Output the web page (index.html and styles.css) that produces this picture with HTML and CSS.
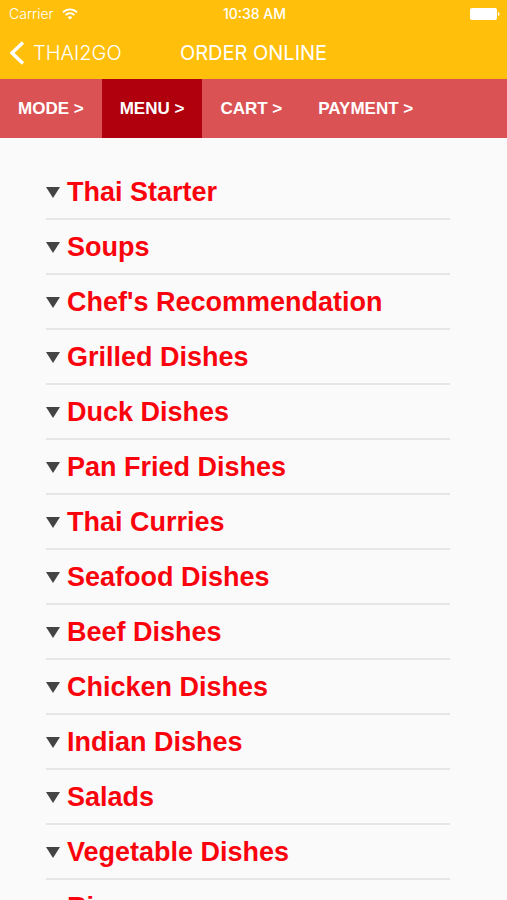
FILE: index.html
```html
<!DOCTYPE html>
<html lang="en">
<head>
<meta charset="UTF-8">
<meta name="viewport" content="width=device-width, initial-scale=1.0">
<title>Thai2Go - Order Online</title>
<link rel="stylesheet" href="styles.css">
</head>
<body>
<header class="header">
  <div class="status-bar">
    <div class="carrier">
      <span>Carrier</span>
      <svg width="16" height="12" viewBox="0 0 16 12" fill="none" stroke="#fff" stroke-width="1.8">
        <path d="M1 4.4C5 .4 11 .4 15 4.4"/>
        <path d="M3.6 7.1C6.2 4.6 9.8 4.6 12.4 7.1"/>
        <path d="M8 11.6L5.6 9.2C7 8 9 8 10.4 9.2Z" fill="#fff" stroke="none"/>
      </svg>
    </div>
    <span class="time">10:38 AM</span>
    <svg class="battery" width="30" height="12" viewBox="0 0 30 12" fill="#fff">
      <rect x="0" y="0" width="27" height="12" rx="2"/>
      <path d="M28 4C30 4.6 30 7.4 28 8Z"/>
    </svg>
  </div>
  <div class="nav-bar">
    <a href="#" class="back">
      <svg width="16" height="24" viewBox="0 0 16 24" fill="none" stroke="#fff" stroke-width="3.4">
        <path d="M14 1.5L3 12L14 22.5"/>
      </svg>
      <span>THAI2GO</span>
    </a>
    <h1>ORDER ONLINE</h1>
  </div>
</header>

<nav class="steps">
  <a href="#mode">MODE &gt;</a>
  <a href="#menu" class="active">MENU &gt;</a>
  <a href="#cart">CART &gt;</a>
  <a href="#payment">PAYMENT &gt;</a>
</nav>

<main class="menu" id="menu">
  <button class="category">Thai Starter</button>
  <button class="category">Soups</button>
  <button class="category">Chef's Recommendation</button>
  <button class="category">Grilled Dishes</button>
  <button class="category">Duck Dishes</button>
  <button class="category">Pan Fried Dishes</button>
  <button class="category">Thai Curries</button>
  <button class="category">Seafood Dishes</button>
  <button class="category">Beef Dishes</button>
  <button class="category">Chicken Dishes</button>
  <button class="category">Indian Dishes</button>
  <button class="category">Salads</button>
  <button class="category">Vegetable Dishes</button>
  <button class="category">Rice</button>
</main>
</body>
</html>
```
FILE: styles.css
```css
* {
  box-sizing: border-box;
}

body {
  display: flex;
  flex-direction: column;
  height: 100vh;
  margin: 0;
  background-color: #fafafa;
  font-family: "Liberation Sans", Arial, sans-serif;
}

.header {
  flex: none;
  background-color: #ffbf0b;
  color: #fff;
  font-family: Inter, Roboto, sans-serif;
}

.status-bar {
  display: grid;
  grid-template-columns: 1fr auto 1fr;
  align-items: center;
  height: 27px;
  padding: 0 7px 0 9px;
  font-size: 14px;
}

.carrier {
  display: flex;
  align-items: center;
  gap: 8px;
  font-weight: 300;
}

.time {
  font-weight: 500;
}

.battery {
  justify-self: end;
}

.nav-bar {
  display: grid;
  grid-template-columns: 1fr auto 1fr;
  align-items: center;
  height: 52px;
  padding: 0 9px;
}

.back {
  display: flex;
  align-items: center;
  gap: 8px;
  color: #fff;
  font-size: 20px;
  font-weight: 300;
  text-decoration: none;
}

.nav-bar h1 {
  margin: 0;
  font-size: 20px;
  font-weight: 400;
}

.steps {
  display: flex;
  flex: none;
  height: 59px;
  background-color: #db5255;
}

.steps a {
  display: flex;
  align-items: center;
  padding: 0 18px;
  color: #fff;
  font-size: 17px;
  font-weight: bold;
  text-decoration: none;
}

.steps .active {
  background-color: #b0000e;
}

/* Only the list scrolls, the bars stay in place */
.menu {
  flex: 1;
  min-height: 0;
  padding: 27px 57px 27px 46px;
  overflow-y: auto;
  scrollbar-width: none;
}

.category {
  display: flex;
  align-items: center;
  gap: 7px;
  width: 100%;
  height: 55px;
  padding: 2px 0 0;
  border: none;
  border-bottom: 2px solid #e6e6e6;
  background: none;
  color: #f9040c;
  font-family: inherit;
  font-size: 27px;
  font-weight: bold;
  text-align: left;
  cursor: pointer;
}

/* Arrow of a closed category */
.category::before {
  content: "";
  border-top: 11px solid #444;
  border-right: 7px solid transparent;
  border-left: 7px solid transparent;
}
```
